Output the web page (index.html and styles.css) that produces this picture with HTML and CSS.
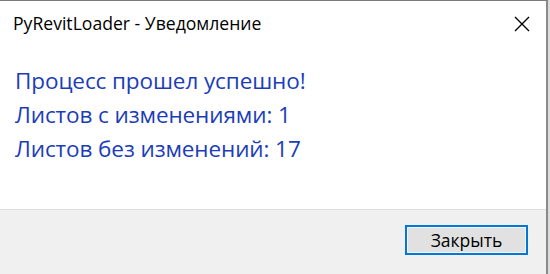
FILE: index.html
```html
<!DOCTYPE html>
<html lang="ru">
<head>
<meta charset="utf-8">
<link rel="stylesheet" href="styles.css">
</head>
<body>
<div class="desk">
  <div class="window">
    <div class="titlebar">
      <span class="title">PyRevitLoader - Уведомление</span>
      <span class="close">
        <svg width="16" height="16" viewBox="0 0 16 16"><path d="M1 1L15 15M15 1L1 15" stroke="#000" stroke-width="1.4" fill="none"/></svg>
      </span>
    </div>
    <div class="content">
      <p class="line">Процесс прошел успешно!</p>
      <p class="line">Листов с изменениями: 1</p>
      <p class="line">Листов без изменений: 17</p>
    </div>
    <div class="footer">
      <button class="btn">Закрыть</button>
    </div>
  </div>
</div>
</body>
</html>
```
FILE: styles.css
```css
html, body {
  margin: 0;
  padding: 0;
  background: #dcdcdc;
}
*, *::before, *::after {
  box-sizing: border-box;
}
.desk {
  width: 550px;
  height: 274px;
  overflow: hidden;
  font-family: "Open Sans", "Noto Sans", sans-serif;
}
.window {
  width: 548px;
  height: 274px;
  background: #fff;
  border-top: 1px solid #7a7a7a;
  border-right: 2px solid #8a8a8a;
  display: flex;
  flex-direction: column;
}
.titlebar {
  height: 44px;
  flex: none;
  display: flex;
  align-items: center;
  justify-content: space-between;
  padding: 0 16px 0 13px;
}
.title {
  font-size: 17.6px;
  color: #000;
}
.close {
  display: flex;
  width: 16px;
  height: 16px;
  margin-top: 2px;
}
.content {
  flex: 1;
  padding: 19px 16px 0 15px;
}
.line {
  margin: 0;
  font-size: 22.5px;
  line-height: 34px;
  color: #1c3db8;
  letter-spacing: -0.1px;
}
.footer {
  flex: none;
  height: 65px;
  background: #f0f0f0;
  border-top: 1px solid #dfdfdf;
  display: flex;
  justify-content: flex-end;
  align-items: flex-start;
  padding: 15px 18px 0 0;
}
.btn {
  width: 123px;
  height: 30px;
  background: #e1e1e1;
  border: 2px solid #0078d7;
  box-shadow: inset 0 0 0 1px #f4f4f4;
  font-family: "Open Sans", "Noto Sans", sans-serif;
  font-size: 17.5px;
  color: #000;
  padding: 0;
}
```
